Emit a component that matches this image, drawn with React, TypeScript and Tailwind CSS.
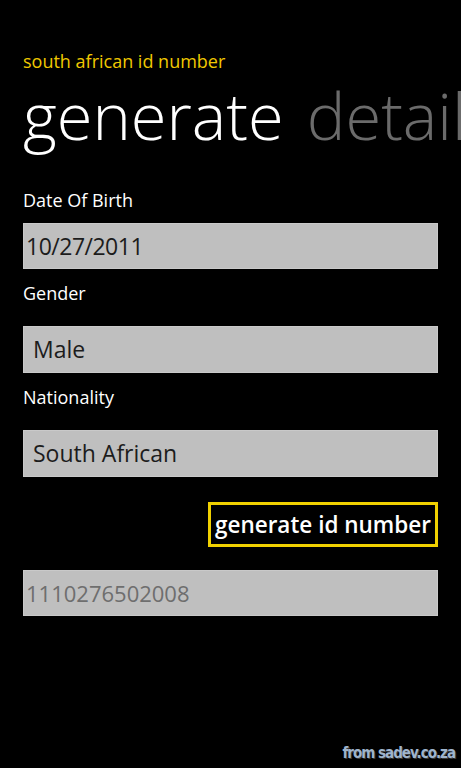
import React from "react";

const font = { fontFamily: '"Open Sans", "Noto Sans", sans-serif' };

const Field = ({
  label,
  value,
  box,
  className,
}: {
  label: string;
  value: string;
  box: string;
  className: string;
}) => {
  return (
    <div className="flex flex-col">
      <span className="text-[18px] leading-[24px] text-white">{label}</span>
      <div className={`${box} w-[415px] border border-[#c9c9c9] bg-[#bfbfbf] flex items-center ${className}`}>
        {value}
      </div>
    </div>
  );
};

const App = () => {
  return (
    <div className="relative w-[461px] h-[768px] overflow-hidden bg-black pl-[23px]" style={font}>
      <div className="pt-[49px] text-[18px] leading-[24px] text-[#f0c800]">south african id number</div>
      <div className="mt-[2px] flex whitespace-nowrap gap-[23px] text-[65px] leading-[80px] font-light">
        <span className="text-white">generate</span>
        <span className="text-[#6b6b6b]">detail</span>
      </div>

      <div className="mt-[33px] flex flex-col gap-[12px]">
        <Field
          label="Date Of Birth"
          value="10/27/2011"
          box="mt-[11px] h-[46px]"
          className="pl-[2px] text-[23px] tracking-[-0.5px] text-[#1c1c1c]"
        />
        <Field label="Gender" value="Male" box="mt-[21px] h-[47px]" className="pl-[9px] text-[23px] text-[#1c1c1c]" />
        <Field
          label="Nationality"
          value="South African"
          box="mt-[21px] h-[47px]"
          className="pl-[9px] text-[23px] text-[#1c1c1c]"
        />
      </div>

      <div className="mt-[25px] flex w-[415px] justify-end">
        <button className="h-[45px] border-[3px] border-[#f0d000] px-[4px] text-[22.5px] font-semibold text-white">
          generate id number
        </button>
      </div>

      <div className="mt-[23px] h-[46px] w-[415px] border border-[#c9c9c9] bg-[#bfbfbf] flex items-center pl-[2px] text-[22px] text-[#6e6e6e]">
        1110276502008
      </div>

      <div
        className="absolute right-[6px] bottom-[4px] text-[15px] font-bold tracking-[-1px] text-[#9fb4cc] [text-shadow:1px_1px_0_#3a3a3a]"
        style={{ fontFamily: '"DejaVu Sans Condensed", "Liberation Sans Narrow", "Liberation Sans", sans-serif' }}
      >
        from sadev.co.za
      </div>
    </div>
  );
};

export default App;
